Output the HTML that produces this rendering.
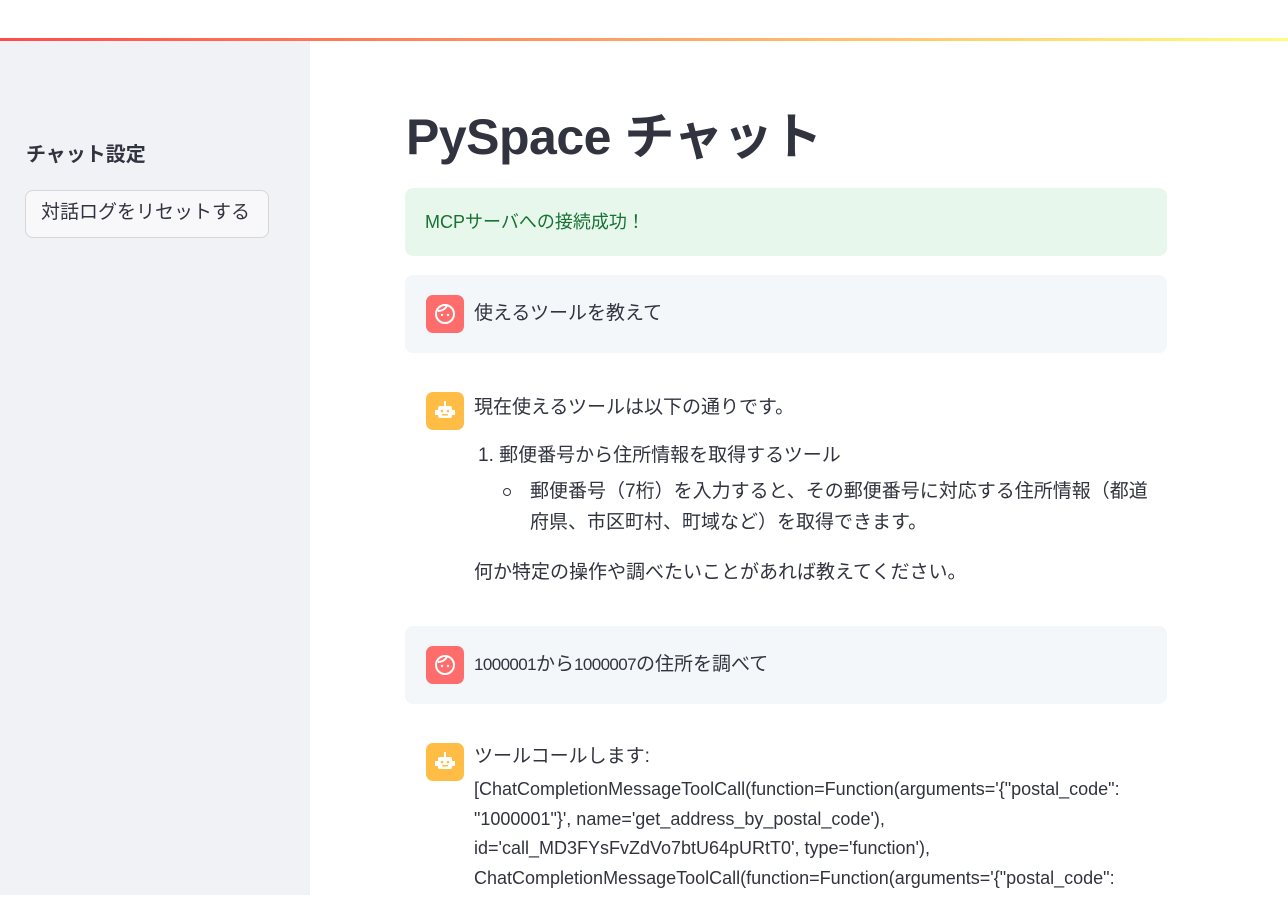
<!DOCTYPE html>
<html><head><meta charset="utf-8"><style>
*{margin:0;padding:0;box-sizing:border-box}
body{width:1288px;height:903px;overflow:hidden;background:#fff;font-family:"Liberation Sans","Noto Sans CJK JP",sans-serif;color:#31333f;position:relative}
.bar{position:absolute;left:0;top:38px;width:1288px;height:3px;background:linear-gradient(90deg,#ff4b4b,#fffd80)}
.side{position:absolute;left:0;top:41px;width:310px;height:854px;background:#f0f2f6}
.t{position:absolute;white-space:nowrap;font-size:19px;line-height:24px}
.box{position:absolute;left:405px;width:762px;border-radius:8px}
.av{position:absolute;left:426px;width:38px;height:38px;border-radius:7px}
.lat{font-size:18px;letter-spacing:0}
</style></head><body>
<div class="bar"></div>
<div class="side"></div>
<div class="t" style="left:26px;top:143px;font-size:20px;font-weight:bold">チャット設定</div>
<div style="position:absolute;left:25px;top:190px;width:244px;height:48px;border:1px solid #d6d6d9;border-radius:8px;background:#f8f8fb"></div>
<div class="t" style="left:41px;top:201px;font-size:19px">対話ログをリセットする</div>

<div class="t" style="left:406px;top:104px;font-size:50px;line-height:66px;font-weight:bold;letter-spacing:-0.5px">PySpace チャット</div>

<div class="box" style="top:188px;height:68px;background:#e8f7ec"></div>
<div class="t" style="left:425px;top:210px;color:#177233;font-size:18px">MCPサーバへの接続成功！</div>

<div class="box" style="top:275px;height:78px;background:#f4f7fa"></div>
<div class="av" style="top:295px;background:#ff6c6c"><svg width="38" height="38" viewBox="0 0 38 38"><circle cx="19" cy="19" r="9" fill="none" stroke="#fff" stroke-width="2"/><path d="M12 16c4 0 7-2 9-5" fill="none" stroke="#fff" stroke-width="2"/><circle cx="16" cy="20" r="1.2" fill="#fff"/><circle cx="22" cy="20" r="1.2" fill="#fff"/></svg></div>
<div class="t" style="left:474px;top:302px">使えるツールを教えて</div>

<div class="av" style="top:392px;background:#ffbd45"><svg width="38" height="38" viewBox="0 0 38 38"><rect x="12" y="14" width="14" height="12" rx="2" fill="#fff"/><rect x="9" y="18" width="3" height="5" fill="#fff"/><rect x="26" y="18" width="3" height="5" fill="#fff"/><rect x="18" y="9" width="2" height="5" fill="#fff"/><circle cx="16" cy="19" r="1.3" fill="#ffbd45"/><circle cx="22" cy="19" r="1.3" fill="#ffbd45"/><rect x="16" y="22" width="6" height="1.5" fill="#ffbd45"/></svg></div>
<div class="t" style="left:474px;top:396px">現在使えるツールは以下の通りです。</div>
<div class="t" style="left:478px;top:444px">1.&nbsp;郵便番号から住所情報を取得するツール</div>
<div style="position:absolute;left:503px;top:488px;width:8px;height:8px;border:1.5px solid #31333f;border-radius:50%"></div>
<div class="t" style="left:530px;top:480px">郵便番号（7桁）を入力すると、その郵便番号に対応する住所情報（都道</div>
<div class="t" style="left:530px;top:511px">府県、市区町村、町域など）を取得できます。</div>
<div class="t" style="left:474px;top:561px">何か特定の操作や調べたいことがあれば教えてください。</div>

<div class="box" style="top:626px;height:78px;background:#f4f7fa"></div>
<div class="av" style="top:646px;background:#ff6c6c"><svg width="38" height="38" viewBox="0 0 38 38"><circle cx="19" cy="19" r="9" fill="none" stroke="#fff" stroke-width="2"/><path d="M12 16c4 0 7-2 9-5" fill="none" stroke="#fff" stroke-width="2"/><circle cx="16" cy="20" r="1.2" fill="#fff"/><circle cx="22" cy="20" r="1.2" fill="#fff"/></svg></div>
<div class="t" style="left:474px;top:653px"><span style="font-size:17px;letter-spacing:-0.6px">1000001</span>から<span style="font-size:17px;letter-spacing:-0.6px">1000007</span>の住所を調べて</div>

<div class="av" style="top:743px;background:#ffbd45"><svg width="38" height="38" viewBox="0 0 38 38"><rect x="12" y="14" width="14" height="12" rx="2" fill="#fff"/><rect x="9" y="18" width="3" height="5" fill="#fff"/><rect x="26" y="18" width="3" height="5" fill="#fff"/><rect x="18" y="9" width="2" height="5" fill="#fff"/><circle cx="16" cy="19" r="1.3" fill="#ffbd45"/><circle cx="22" cy="19" r="1.3" fill="#ffbd45"/><rect x="16" y="22" width="6" height="1.5" fill="#ffbd45"/></svg></div>
<div class="t" style="left:474px;top:745px">ツールコールします:</div>
<div class="t lat" style="left:474px;top:777px">[ChatCompletionMessageToolCall(function=Function(arguments='{"postal_code":</div>
<div class="t lat" style="left:474px;top:807px">"1000001"}', name='get_address_by_postal_code'),</div>
<div class="t lat" style="left:474px;top:836px">id='call_MD3FYsFvZdVo7btU64pURtT0', type='function'),</div>
<div class="t lat" style="left:474px;top:866px">ChatCompletionMessageToolCall(function=Function(arguments='{"postal_code":</div>
</body></html>
